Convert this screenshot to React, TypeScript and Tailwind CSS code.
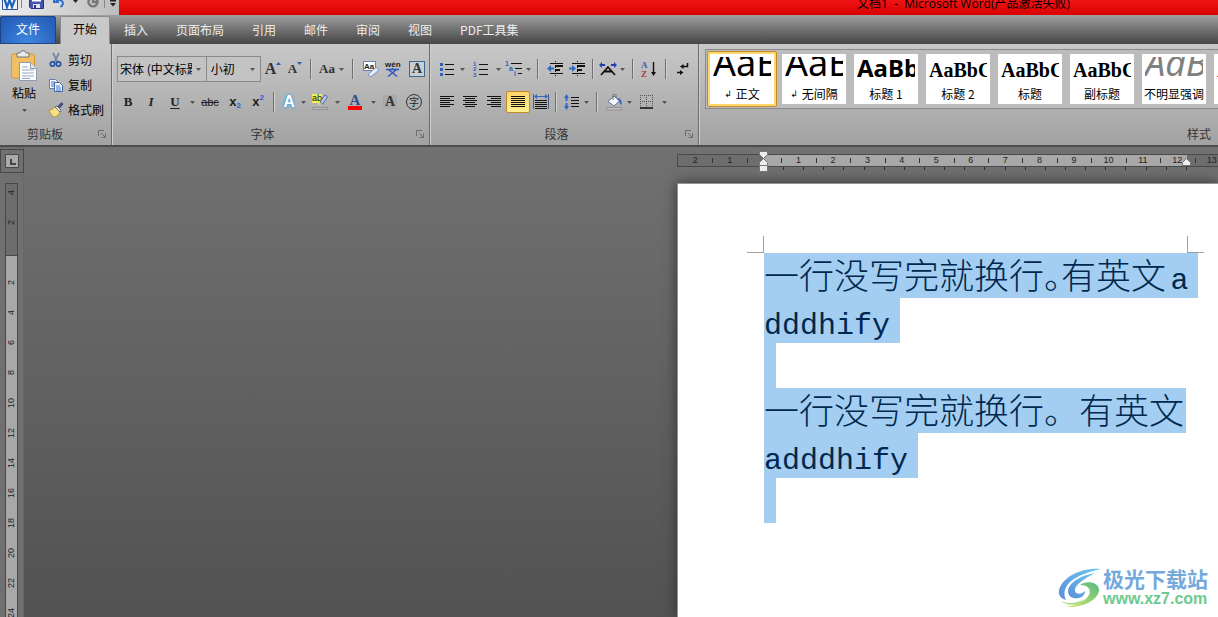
import type { ReactNode } from 'react'

const tabs = ['插入', '页面布局', '引用', '邮件', '审阅', '视图', 'PDF工具集']

const bodyPreview = 'font-[Noto_Sans] text-4xl leading-[12px]'
const headPreview = 'font-[Liberation_Serif] text-[20px] leading-[26px] font-bold'

const styles = [
    { name: '正文', mark: true, preview: bodyPreview },
    { name: '无间隔', mark: true, preview: bodyPreview },
    { name: '标题 1', preview: 'font-[Noto_Sans] text-2xl leading-[22px] font-bold' },
    { name: '标题 2', preview: headPreview },
    { name: '标题', preview: headPreview },
    { name: '副标题', preview: headPreview },
    { name: '不明显强调', preview: 'font-[Noto_Sans] text-4xl leading-[12px] italic text-[#808080]' },
    { name: '强调', preview: headPreview },
]

const rulerNumbers = ['2', '1', '', '1', '2', '3', '4', '5', '6', '7', '8', '9', '10', '11', '12', '13']
const sideNumbers = ['2', '', '2', '4', '6', '8', '10', '12', '14', '16', '18', '20', '22', '24', '26']

function Caret() {
    return (
        <svg width="5" height="3" viewBox="0 0 5 3" className="shrink-0">
            <path d="M0 0h5L2.5 3z" fill="#555" />
        </svg>
    )
}

function Tool({ label, className, children }: { label: string; className: string; children: ReactNode }) {
    return (
        <button
            type="button"
            aria-label={label}
            className={`flex h-6 shrink-0 items-center justify-center ${className}`}
        >
            {children}
        </button>
    )
}

function More({ label, className = 'w-2' }: { label: string; className?: string }) {
    return (
        <Tool label={label} className={className}>
            <Caret />
        </Tool>
    )
}

function Sep({ className }: { className: string }) {
    return (
        <div className={`flex h-6 shrink-0 items-center justify-center ${className}`}>
            <div className="h-5 w-0.5 border-r border-l border-r-[#d0d0d0] border-l-[#707070]" />
        </div>
    )
}

function GroupTitle({ title }: { title: string }) {
    return (
        <div className="mt-auto flex h-[22px] items-center pr-[5px] text-[#333]">
            <span className="flex-1 pr-2 text-center">{title}</span>
            <button type="button" aria-label={`${title}设置`}>
                <svg width="8" height="8" viewBox="0 0 8 8" fill="none" stroke="#6b6b6b">
                    <path d="M.5 6V.5H6M3 3l4 4M7.5 3.5v4h-4" />
                </svg>
            </button>
        </div>
    )
}

function QuickAccess() {
    return (
        <div className="flex h-[15px] w-[119px] shrink-0 items-start bg-linear-to-r from-[#f0f0f0] to-[#bcbcbc] pl-0.5">
            <svg width="16" height="12" viewBox="0 0 16 12">
                <path d="M.5-4h15v13.5H.5z" fill="#eef4fc" stroke="#2b5797" />
                <path d="M2.5-1 5 7l2.500-7L10 7l3-8" fill="none" stroke="#1f62b8" strokeWidth="2.200" />
            </svg>
            <div className="mx-[3px] h-2 w-px bg-[#888]" />
            <svg width="16" height="12" viewBox="0 0 16 12" className="ml-1">
                <path d="M.5-4h14V8.500H2L.5 7z" fill="#4653b0" stroke="#2a3180" />
                <path d="M3-3h9v4.500H3z" fill="#fff" />
                <path d="M4 4h7v4H4z" fill="#dfe3f5" />
                <path d="M5 5h2v3H5z" fill="#2a3180" />
            </svg>
            <svg width="14" height="10" viewBox="0 0 14 10" className="ml-2" fill="none">
                <path d="M1-2v4h5M3 1c5-3 10 2 4.500 6" stroke="#2f6fd0" strokeWidth="2" />
            </svg>
            <svg width="5" height="6" viewBox="0 0 5 6" className="ml-1.5">
                <path d="M0 0h5L2.500 3z" fill="#222" />
            </svg>
            <svg width="14" height="10" viewBox="0 0 14 10" className="ml-2" fill="none">
                <path d="M3.500-1a4.500 4.500 0 1 0 7 0M7-2v4h4" stroke="#777" strokeWidth="2.500" />
            </svg>
            <div className="mx-1 h-2 w-px bg-[#888]" />
            <svg width="8" height="8" viewBox="0 0 8 8">
                <path d="M1 0h6v1.500H1zM1 3h6L4 6.500z" fill="#222" />
            </svg>
        </div>
    )
}

function Clipboard() {
    return (
        <section className="flex w-28 shrink-0 flex-col border-r border-[#6c6c6c]">
            <div className="flex pt-[3px]">
                <button type="button" className="flex w-12 flex-col items-center pt-[3px]">
                    <svg width="28" height="32" viewBox="0 0 28 32">
                        <rect x="1.5" y="4" width="23" height="24" rx="2" fill="#f0be63" stroke="#d99a35" />
                        <path d="M7 3h3c0-3 6-3 6 0h3v4H7z" fill="#e8e8e8" stroke="#777" />
                        <path d="M9.500 12.500h11l6 6v12h-17z" fill="#fafcff" stroke="#8d9bb0" />
                        <path d="M20.500 12.500v6h6" fill="#dce6f2" stroke="#8d9bb0" />
                        <path d="M12 17h6M12 20h12M12 23h12M12 26h12M12 28.500h8" stroke="#9ba9bd" />
                    </svg>
                    <span className="mt-[3px] leading-4">粘贴</span>
                    <span className="mt-2">
                        <Caret />
                    </span>
                </button>
                <div className="flex flex-col">
                    <button type="button" className="flex h-[25px] items-center gap-1">
                        <svg width="16" height="16" viewBox="0 0 16 16" fill="none">
                            <path d="M5 1l4.500 9M11 1 6.500 10" stroke="#7688a0" strokeWidth="1.7" />
                            <circle cx="4.5" cy="12" r="2.2" stroke="#2454a0" strokeWidth="1.7" />
                            <circle cx="10.5" cy="12" r="2.2" stroke="#2454a0" strokeWidth="1.7" />
                        </svg>
                        剪切
                    </button>
                    <button type="button" className="flex h-[25px] items-center gap-1">
                        <svg width="16" height="16" viewBox="0 0 16 16">
                            <path d="M1.500 2.500h6l2 2v7h-8z" fill="#f5f9ff" stroke="#5f7fb0" />
                            <path d="M3 5h4M3 7h4M3 9h3" stroke="#3f70c0" />
                            <path d="M6.500 5.500h5l3 3v6h-8z" fill="#f5f9ff" stroke="#3c64a8" />
                            <path d="M8 9h4M8 11h5M8 13h5" stroke="#3f70c0" />
                        </svg>
                        复制
                    </button>
                    <button type="button" className="flex h-[25px] items-center gap-1">
                        <svg width="16" height="16" viewBox="0 0 16 16">
                            <path d="M1 8c3 0 4-1 6-3l5 5c-1 3-4 5-6 5-2-1-4-4-5-7z" fill="#f7e184" stroke="#b59835" />
                            <path d="M7 5l2-1 4 4-1 2z" fill="#ececf4" stroke="#666b80" />
                            <path d="M10.500 5.500 14.500 1" stroke="#4a4f80" strokeWidth="3" />
                        </svg>
                        格式刷
                    </button>
                </div>
            </div>
            <GroupTitle title="剪贴板" />
        </section>
    )
}

function FontGroup() {
    return (
        <section className="flex w-[318px] shrink-0 flex-col border-r border-[#6c6c6c] pl-[5px] shadow-[inset_1px_0_#cfcfcf]">
            <div className="mt-3 flex items-center">
                <div className="relative w-[91px]">
                    <select
                        aria-label="字体"
                        className="h-[26px] w-full appearance-none border border-[#8a8a8a] bg-[#c3c3c3] pr-3.5 pl-0.5"
                    >
                        <option>宋体 (中文标题)</option>
                    </select>
                    <span className="pointer-events-none absolute top-3 right-1.5">
                        <Caret />
                    </span>
                </div>
                <div className="relative w-[55px]">
                    <select
                        aria-label="字号"
                        className="h-[26px] w-full appearance-none border border-l-0 border-[#8a8a8a] bg-[#c3c3c3] pl-1"
                    >
                        <option>小初</option>
                    </select>
                    <span className="pointer-events-none absolute top-3 right-1.5">
                        <Caret />
                    </span>
                </div>
                <Tool label="增大字体" className="w-6 font-[Liberation_Serif] text-base font-bold text-[#333]">
                    A
                    <svg width="5" height="14" viewBox="0 0 5 14">
                        <path d="M0 3h5L2.500 0z" fill="#2f5bb0" />
                    </svg>
                </Tool>
                <Tool label="缩小字体" className="w-5 font-[Liberation_Serif] text-[13px] font-bold text-[#333]">
                    A
                    <svg width="5" height="14" viewBox="0 0 5 14">
                        <path d="M0 0h5L2.500 3z" fill="#2f5bb0" />
                    </svg>
                </Tool>
                <Sep className="w-3" />
                <Tool label="更改大小写" className="w-5 font-[Liberation_Serif] text-[13px] font-bold text-[#333]">
                    Aa
                </Tool>
                <More label="大小写选项" />
                <Sep className="w-4" />
                <Tool label="清除格式" className="w-5">
                    <svg width="17" height="17" viewBox="0 0 17 17">
                        <rect x=".5" y=".5" width="12" height="9" fill="#fff" stroke="#6484b5" />
                        <text x="1" y="8" fontSize="8" fontWeight="700" fontFamily="Liberation Sans" fill="#222">
                            Aa
                        </text>
                        <path d="M5.500 13 12 7c2-1 4 1 3 3l-6 5c-2 1-4 0-3.500-2z" fill="#e8eef9" stroke="#6f8dbd" />
                    </svg>
                </Tool>
                <Tool label="拼音指南" className="w-6">
                    <svg width="18" height="18" viewBox="0 0 18 18">
                        <text x="1" y="7" fontSize="8" fontWeight="700" fontFamily="Liberation Sans" fill="#222">
                            wén
                        </text>
                        <path d="M2 9.500h13M8.500 8v2M5 10l8 6.500M12 10l-8 6.500" fill="none" stroke="#3355bb" strokeWidth="1.5" />
                    </svg>
                </Tool>
                <Tool label="字符边框" className="w-6">
                    <span className="flex size-4 items-center justify-center border border-[#42658c] bg-[#c9ced4] font-[Liberation_Serif] text-[14px] font-bold text-[#333]">
                        A
                    </span>
                </Tool>
            </div>
            <div className="mt-2 flex items-center font-[Liberation_Serif] text-[13px] font-bold text-[#222]">
                <Tool label="加粗" className="w-[22px]">
                    B
                </Tool>
                <Tool label="倾斜" className="w-6 italic">
                    I
                </Tool>
                <Tool label="下划线" className="w-6 underline underline-offset-2">
                    U
                </Tool>
                <More label="下划线选项" className="w-2.5" />
                <Tool label="删除线" className="w-[26px] font-[Liberation_Sans] text-[11px] font-normal line-through">
                    abc
                </Tool>
                <Tool label="下标" className="w-6 font-[Liberation_Sans]">
                    x<span className="mt-2 text-[8px] text-[#2f5bd0]">2</span>
                </Tool>
                <Tool label="上标" className="w-[22px] font-[Liberation_Sans]">
                    x<span className="mb-2 text-[8px] text-[#2f5bd0]">2</span>
                </Tool>
                <Sep className="w-2.5" />
                <Tool
                    label="文本效果"
                    className="w-5 font-[Liberation_Sans] text-base text-white [text-shadow:0_0_1px_#2f9be0,0_0_2px_#2f9be0,0_0_4px_#4fb4ee]"
                >
                    A
                </Tool>
                <More label="文本效果选项" />
                <Tool label="突出显示" className="w-[26px]">
                    <svg width="18" height="18" viewBox="0 0 18 18">
                        <path d="M1 1h10v9H1z" fill="#f5f060" />
                        <text x="1" y="8" fontSize="9" fontWeight="400" fontFamily="Liberation Sans" fill="#111">
                            ab
                        </text>
                        <path d="M9 9l5-7 2.500 2-5 7z" fill="#b9cdeb" stroke="#48679a" />
                        <path d="M8 9l3 2-4 1z" fill="#f3d36b" />
                        <path d="M1.500 14.500h15v2h-15z" fill="#bdbdbd" stroke="#909090" />
                    </svg>
                </Tool>
                <More label="突出显示选项" />
                <Tool label="字体颜色" className="w-7 text-[15px]">
                    <span className="border-b-4 border-[#f00] px-0.5 leading-3 text-[#2f4f8c]">A</span>
                </Tool>
                <More label="字体颜色选项" />
                <Tool label="字符底纹" className="w-[26px]">
                    <span className="bg-[#a9a9a9] px-0.5 text-[14px] leading-[14px] text-[#333]">A</span>
                </Tool>
                <Tool label="带圈字符" className="w-[22px]">
                    <span className="flex size-4 items-center justify-center rounded-full border border-[#333] font-['Noto_Sans_CJK_SC'] text-[10px] font-normal">
                        字
                    </span>
                </Tool>
            </div>
            <GroupTitle title="字体" />
        </section>
    )
}

function Lines({ d }: { d: string }) {
    return (
        <svg width="16" height="14" viewBox="0 0 16 14" fill="none">
            <path d={d} stroke="#111" />
        </svg>
    )
}

function Indent({ arrow }: { arrow: string }) {
    return (
        <svg width="17" height="16" viewBox="0 0 17 16" fill="none">
            <path d="M3 2.500h13M3 12.500h13" stroke="#111" />
            <path d="M8 5h8M8 9h5" stroke="#111" strokeWidth="2" />
            <path d="M8.500 0v15" stroke="#111" strokeDasharray="1 1" />
            <path d={arrow} fill="#2f68c4" />
        </svg>
    )
}

function ParagraphGroup() {
    return (
        <section className="flex w-[269px] shrink-0 flex-col border-r border-[#6c6c6c] pl-1.5 shadow-[inset_1px_0_#cfcfcf]">
            <div className="mt-[13px] flex items-center">
                <Tool label="项目符号" className="w-[22px]">
                    <svg width="14" height="15" viewBox="0 0 14 15">
                        <path d="M5 2.500h9M5 7.500h9M5 12.500h9" stroke="#111" />
                        <path d="M0 1h3v3H0zM0 6h3v3H0zM0 11h3v3H0z" fill="#3560b0" />
                    </svg>
                </Tool>
                <More label="项目符号选项" />
                <Tool label="编号" className="w-7">
                    <svg width="15" height="16" viewBox="0 0 15 16">
                        <path d="M6 3.500h9M6 8.500h9M6 13.500h9" stroke="#111" />
                        <g fontSize="6" fontWeight="700" fontFamily="Liberation Sans" fill="#2f60c0">
                            <text x="0" y="5">1</text>
                            <text x="0" y="10">2</text>
                            <text x="0" y="16">3</text>
                        </g>
                    </svg>
                </Tool>
                <More label="编号选项" />
                <Tool label="多级列表" className="w-[22px]">
                    <svg width="17" height="16" viewBox="0 0 17 16">
                        <path d="M6 2.500h11M10 7.500h7M13 12.500h4" stroke="#111" />
                        <g fontSize="7" fontWeight="700" fontFamily="Liberation Sans" fill="#2f60c0">
                            <text x="0" y="5">1</text>
                            <text x="4" y="10">a</text>
                            <text x="9" y="15">i</text>
                        </g>
                    </svg>
                </Tool>
                <More label="多级列表选项" />
                <Sep className="w-3" />
                <Tool label="减少缩进量" className="w-[22px]">
                    <Indent arrow="M0 7.500 4 4v2.500h3v2H4V11z" />
                </Tool>
                <Tool label="增加缩进量" className="w-[22px]">
                    <Indent arrow="M7 7.500 3 4v2.500H0v2h3V11z" />
                </Tool>
                <Sep className="w-2.5" />
                <Tool label="中文版式" className="w-5">
                    <svg width="18" height="14" viewBox="0 0 18 14" fill="none">
                        <path d="M2 13l7-8 7 8M5 9.500h8" stroke="#111" strokeWidth="1.8" />
                        <path d="M0 3l3-3v2h3v2H3v2zM18 3l-3-3v2h-3v2h3v2z" fill="#1f3fb0" />
                    </svg>
                </Tool>
                <More label="中文版式选项" />
                <Sep className="w-3.5" />
                <Tool label="排序" className="w-[18px]">
                    <svg width="16" height="17" viewBox="0 0 16 17">
                        <g fontSize="9" fontWeight="700" fontFamily="Liberation Serif">
                            <text x="0" y="7" fill="#3560b0">A</text>
                            <text x="0" y="16" fill="#b03a3a">Z</text>
                        </g>
                        <path d="M12.500 1v12" stroke="#111" strokeWidth="1.4" />
                        <path d="M10 11h5l-2.500 4z" fill="#111" />
                    </svg>
                </Tool>
                <Sep className="w-4" />
                <Tool label="显示编辑标记" className="w-[18px]">
                    <svg width="12" height="14" viewBox="0 0 12 14" fill="none">
                        <path d="M10.500 1v3.500H5M0 10.500h4" stroke="#111" strokeWidth="1.5" />
                        <path d="M3 4.500 6.500 2v5zM6.500 10.500 3 8v5z" fill="#111" />
                    </svg>
                </Tool>
            </div>
            <div className="mt-[9px] flex items-center">
                <Tool label="左对齐" className="w-[22px]">
                    <Lines d="M1 1.500h14M1 3.500h10M1 5.500h14M1 7.500h10M1 9.500h14M1 11.500h10" />
                </Tool>
                <Tool label="居中" className="w-6">
                    <Lines d="M1 1.500h14M3 3.500h10M1 5.500h14M3 7.500h10M1 9.500h14M3 11.500h10" />
                </Tool>
                <Tool label="右对齐" className="w-6">
                    <Lines d="M1 1.500h14M5 3.500h10M1 5.500h14M5 7.500h10M1 9.500h14M5 11.500h10" />
                </Tool>
                <button
                    type="button"
                    aria-label="两端对齐"
                    className="flex h-[22px] w-6 shrink-0 items-center justify-center rounded-xs border border-[#c28a30] bg-linear-to-b from-[#ffd56b] to-[#fff08e]"
                >
                    <Lines d="M1 1.500h14M1 3.500h14M1 5.500h14M1 7.500h14M1 9.500h14M1 11.500h14" />
                </button>
                <Tool label="分散对齐" className="w-[22px]">
                    <svg width="16" height="16" viewBox="0 0 16 16" fill="none">
                        <path d="M.5 0v15M15.500 0v15" stroke="#4a5f80" />
                        <path d="M2 6.500h12M2 8.500h12M2 10.500h12M2 12.500h12M2 14.500h12" stroke="#111" />
                        <path d="M1 2.500 4 0v2h8V0l3 2.500L12 5V3H4v2z" fill="#2f68c4" />
                    </svg>
                </Tool>
                <Sep className="w-2" />
                <Tool label="行距" className="w-[22px]">
                    <svg width="15" height="16" viewBox="0 0 15 16">
                        <path d="M7 3.500h8M7 6.500h8M7 9.500h8M7 12.500h8" stroke="#111" />
                        <path d="M2.500 0 5 4H3.500v3h-2V4H0zM2.500 16 0 12h1.500V9h2v3H5z" fill="#2f68c4" />
                    </svg>
                </Tool>
                <More label="行距选项" />
                <Sep className="w-3.5" />
                <Tool label="底纹" className="w-5">
                    <svg width="17" height="17" viewBox="0 0 17 17">
                        <path d="M2 7.500 8 2l5.500 5L8 12z" fill="#f4f7fc" stroke="#5c78a5" />
                        <path d="M7 6V1.500c0-2 3-2 3 0V4" fill="none" stroke="#666" />
                        <path d="M11 4c4 0 5 3 4.500 7-2-1-2-3-2-4z" fill="#2f62b4" />
                        <path d="M.5 13.500h15v2.500H.5z" fill="#c2c2c2" stroke="#909090" />
                    </svg>
                </Tool>
                <More label="底纹选项" className="w-2.5" />
                <Tool label="边框" className="w-[26px]">
                    <svg width="14" height="14" viewBox="0 0 14 14" fill="none">
                        <path
                            d="M0 .5h13M0 6.500h13M.5 0v13M6.500 0v13M12.500 0v13"
                            stroke="#555"
                            strokeDasharray="1 1"
                        />
                        <path d="M0 13h13" stroke="#111" strokeWidth="1.5" />
                    </svg>
                </Tool>
                <More label="边框选项" />
            </div>
            <GroupTitle title="段落" />
        </section>
    )
}

function StylesGroup() {
    return (
        <section className="flex min-w-0 flex-1 flex-col overflow-hidden pl-1.5 shadow-[inset_1px_0_#cfcfcf]">
            <div className="mt-[5px] flex h-[60px] items-center gap-0.5 border border-r-0 border-[#8a8a8a] bg-[#bcbcbc] pl-px">
                {styles.map((style, i) => (
                    <button
                        key={style.name}
                        type="button"
                        className={`flex shrink-0 rounded-xs border p-0.5 ${
                            i === 0 ? 'border-[#c28a30] bg-[#ffd869]' : 'border-transparent'
                        }`}
                    >
                        <span className="flex h-[50px] w-16 flex-col justify-between bg-white pt-[3px]">
                            <span className={`mx-[3px] h-[22px] overflow-hidden text-left ${style.preview}`}>
                                AaBbCc
                            </span>
                            <span className="flex items-center justify-center gap-1 leading-5 whitespace-nowrap">
                                {style.mark && <span className="font-['DejaVu_Sans'] text-[9px]">↲</span>}
                                {style.name}
                            </span>
                        </span>
                    </button>
                ))}
            </div>
            <div className="mt-auto flex h-[22px] items-center justify-end pr-[7px] text-[#333]">样式</div>
        </section>
    )
}

function TopRuler() {
    return (
        <div className="relative h-[17px]">
            <div className="grid h-[13px] w-[552px] grid-cols-16 border-y border-l border-[#4a4a4a] bg-[linear-gradient(to_right,#6d6d6d_86px,#a8a8a8_86px,#a8a8a8_509px,#6d6d6d_509px)] font-[Liberation_Sans] text-[9px] leading-[11px] text-[#222]">
                {rulerNumbers.map((n, i) => (
                    <div key={i} className="relative text-center">
                        {n}
                        {i > 0 && <span className="absolute top-[3px] left-0 h-[5px] w-px bg-[#333]" />}
                    </div>
                ))}
            </div>
            <div className="ml-[106px] flex w-[404px] justify-between">
                {Array.from({ length: 21 }, (_, i) => (
                    <span key={i} className="h-[3px] w-px bg-[#2e2e2e]" />
                ))}
            </div>
            <svg width="9" height="21" viewBox="0 0 9 21" className="absolute -top-[3px] left-[82px]">
                <path d="M.5.5h8v3L4.500 7.500l-4-4z" fill="#eee" stroke="#777" />
                <path d="M.5 14.500v-3l4-4 4 4v3z" fill="#eee" stroke="#777" />
                <path d="M.5 14.500h8v6h-8z" fill="#eee" stroke="#777" />
            </svg>
            <svg width="9" height="9" viewBox="0 0 9 9" className="absolute top-1 left-[505px]">
                <path d="M.5 7.500v-3l4-4 4 4v3z" fill="#eee" stroke="#777" />
            </svg>
        </div>
    )
}

function SideRuler() {
    return (
        <aside className="flex w-6 shrink-0 flex-col border-r border-[#686868] bg-[#707070] pt-0.5">
            <button
                type="button"
                aria-label="制表符"
                className="flex h-6 w-6 shrink-0 items-center justify-center border border-[#484848]"
            >
                <svg width="14" height="14" viewBox="0 0 14 14">
                    <path d="M.5.5h13v13H.5z" fill="#aaa" stroke="#484848" />
                    <path d="M5 5h2v4h4v2H5z" fill="#444" />
                </svg>
            </button>
            <div className="mt-2.5 ml-[5px] flex min-h-0 w-[13px] flex-1 flex-col overflow-hidden border border-b-0 border-[#484848] bg-[linear-gradient(#6d6d6d_71px,#484848_71px,#484848_72px,#a8a8a8_72px)] font-[Liberation_Sans] text-[9px] leading-[11px] text-[#222]">
                <div className="flex h-6 shrink-0 items-start justify-center pt-1.5">
                    <span className="rotate-180 [writing-mode:vertical-rl]">4</span>
                </div>
                {sideNumbers.map((n, i) => (
                    <div key={i} className="flex h-[30px] shrink-0 items-center justify-center">
                        <span className="rotate-180 [writing-mode:vertical-rl]">{n}</span>
                    </div>
                ))}
            </div>
        </aside>
    )
}

function Line({ className, children }: { className?: string; children?: ReactNode }) {
    return <div className={`h-[45px] bg-[#a3cef1] whitespace-nowrap ${className}`}>{children}</div>
}

function Latin({ children }: { children: ReactNode }) {
    return <span className="font-['Liberation_Mono',monospace] text-[30px]">{children}</span>
}

function Watermark() {
    return (
        <a href="#" className="absolute right-2.5 bottom-2 flex items-center gap-px">
            <svg width="44" height="42" viewBox="0 0 44 42">
                <defs>
                    <linearGradient id="blue" x1="0" y1="1" x2="1" y2="0">
                        <stop offset="0" stopColor="#5b8fd6" />
                        <stop offset="1" stopColor="#6cc6f0" />
                    </linearGradient>
                    <linearGradient id="green" x1="0" y1="1" x2="1" y2="0">
                        <stop offset="0" stopColor="#d8e86a" />
                        <stop offset="1" stopColor="#55b980" />
                    </linearGradient>
                </defs>
                <path
                    d="M43 2C25 0 5 9 1 23c-1 6 3 9 7 10-4-8 0-16 8-21C24 7 33 4 43 2z"
                    fill="url(#blue)"
                />
                <path
                    d="M37 6C24 8 11 15 10 24c0 6 5 8 11 7 4-1 6-4 6-7-3 3-9 4-10 0-1-6 9-12 20-18z"
                    fill="url(#blue)"
                />
                <path
                    d="M22 18c6-5 19-3 19 5C40 33 26 41 6 40c10-1 21-5 25-12 3-6-2-10-9-10z"
                    fill="url(#green)"
                />
                <path d="M3 34c6 3 17 3 23-2-4 6-15 8-23 2z" fill="#a7d97a" />
            </svg>
            <span className="flex flex-col">
                <span className="text-[21px] leading-[22px] font-bold text-[#74a9dc]">极光下载站</span>
                <span className="font-['Liberation_Sans'] text-base leading-5 font-bold text-[#6dca8d]">
                    www.xz7.com
                </span>
            </span>
        </a>
    )
}

export default function App() {
    return (
        <div className="flex h-screen flex-col overflow-hidden font-['Noto_Sans_CJK_SC',sans-serif] text-xs text-black">
            <header className="flex h-[15px] shrink-0 overflow-hidden bg-linear-to-b from-[#f01414] to-[#d90000]">
                <QuickAccess />
                <h1 className="mr-[148px] ml-auto font-['Open_Sans','Noto_Sans_CJK_SC'] leading-2 whitespace-pre">
                    文档1  -  Microsoft Word(产品激活失败)
                </h1>
            </header>

            <nav className="flex h-[29px] shrink-0 items-end bg-linear-to-b from-[#a0a0a0] to-[#464646]">
                <button
                    type="button"
                    className="h-7 w-14 rounded-t-xs border border-[#1c4587] bg-radial-[at_50%_100%] from-[#3f86e0] to-[#2259b4] pb-0.5 text-white"
                >
                    文件
                </button>
                <button
                    type="button"
                    className="ml-1 h-7 w-[50px] rounded-t-xs border border-b-0 border-[#8a8a8a] bg-[#c8c8c8] pb-[3px]"
                >
                    开始
                </button>
                <div className="ml-3.5 flex h-7 items-center gap-7 pb-px text-[#ececec]">
                    {tabs.map((tab) => (
                        <button key={tab} type="button">
                            {tab}
                        </button>
                    ))}
                </div>
            </nav>

            <div className="flex h-[103px] shrink-0 border-b-2 border-[#4c4c4c] bg-linear-to-b from-[#c8c8c8] to-[#a2a2a2]">
                <Clipboard />
                <FontGroup />
                <ParagraphGroup />
                <StylesGroup />
            </div>

            <main className="flex min-h-0 flex-1 bg-linear-to-b from-[#717171] to-[#525252]">
                <SideRuler />
                <div className="flex min-w-0 flex-1 justify-end overflow-hidden">
                    <div className="flex w-[541px] shrink-0 flex-col pt-[7px]">
                        <TopRuler />
                        <article className="relative mt-3 flex-1 border-t border-l border-[#8f959c] bg-white pt-[52px] shadow-[0_0_12px_#333]">
                            <div className="ml-[69px] flex h-[17px]">
                                <div className="w-[17px] border-r border-b border-[#a0a0a0]" />
                                <div className="w-[423px]" />
                                <div className="w-[17px] border-b border-l border-[#a0a0a0]" />
                            </div>
                            <div className="ml-[86px] flex flex-col items-start text-[35px] leading-[41px] font-light text-[#00284f]">
                                <Line className="pr-2.5">
                                    一行没写完就换行<span className="inline-block w-[17px]">。</span>有英文
                                    <span className="text-xl"> </span>
                                    <Latin>a</Latin>
                                </Line>
                                <Line className="pr-2.5">
                                    <Latin>dddhify</Latin>
                                </Line>
                                <Line className="w-3" />
                                <Line className="pr-0.5">一行没写完就换行。有英文</Line>
                                <Line className="pr-2.5">
                                    <Latin>adddhify</Latin>
                                </Line>
                                <Line className="w-3" />
                            </div>
                            <Watermark />
                        </article>
                    </div>
                </div>
            </main>
        </div>
    )
}
